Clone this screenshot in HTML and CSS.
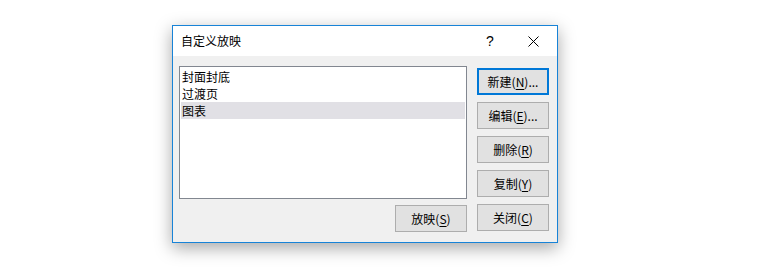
FILE: index.html
```html
<!DOCTYPE html>
<html>
<head>
  <title>自定义放映</title>
  <meta charset="utf-8">
  <link rel="stylesheet" href="styles.css">
</head>
<body>
  <div class="dialog">
    <div class="titlebar">
      <span class="title">自定义放映</span>
      <span class="help">?</span>
      <span class="close">
        <svg width="11" height="11" viewBox="0 0 11 11"><path d="M0.5 0.5 L10.5 10.5 M10.5 0.5 L0.5 10.5" stroke="#000" stroke-width="1" fill="none"/></svg>
      </span>
    </div>
    <div class="content">
      <div class="left">
        <ul class="list">
          <li>封面封底</li>
          <li>过渡页</li>
          <li class="selected">图表</li>
        </ul>
        <div class="bottom">
          <span class="btn">放映(<u>S</u>)</span>
        </div>
      </div>
      <div class="side">
        <span class="btn default">新建(<u>N</u>)...</span>
        <span class="btn">编辑(<u>E</u>)...</span>
        <span class="btn">删除(<u>R</u>)</span>
        <span class="btn">复制(<u>Y</u>)</span>
        <span class="btn">关闭(<u>C</u>)</span>
      </div>
    </div>
  </div>
</body>
</html>
```

FILE: styles.css
```css
html, body {
  height: 100%;
}
body {
  margin: 0;
  padding-top: 25px;
  box-sizing: border-box;
  background-color: #fff;
  font-family: "Noto Sans CJK SC", "Noto Sans", sans-serif;
  font-size: 12px;
  color: #000;
}
.dialog {
  width: 384px;
  margin-left: 172px;
  border: 1px solid #1883d7;
  background-color: #f0f0f0;
  box-shadow: 0 5px 16px rgba(0,0,0,.35);
}
.titlebar {
  height: 30px;
  background-color: #fff;
  display: flex;
  align-items: center;
  padding-left: 8px;
}
.title {
  flex: 1;
  line-height: 16px;
}
.help {
  font-family: "Liberation Sans", sans-serif;
  font-size: 14px;
  width: 20px;
  margin-right: 28px;
  text-align: center;
}
.close {
  display: flex;
  width: 11px;
  margin-right: 18px;
}
.content {
  display: flex;
  gap: 10px;
  padding: 10px 8px 10px 6px;
}
.left {
  display: flex;
  flex-direction: column;
  gap: 6px;
}
.list {
  width: 284px;
  height: 129px;
  margin: 0;
  padding: 1px;
  list-style: none;
  background-color: #fff;
  border: 1px solid #828790;
}
.list li {
  height: 17px;
  line-height: 17px;
  padding-left: 1px;
}
.list li.selected {
  background-color: #e1e0e5;
}
.bottom {
  display: flex;
  justify-content: flex-end;
}
.side {
  display: flex;
  flex-direction: column;
  gap: 7px;
  padding-top: 2px;
}
.btn {
  box-sizing: border-box;
  display: flex;
  align-items: center;
  justify-content: center;
  width: 72px;
  height: 27px;
  background-color: #e1e1e1;
  border: 1px solid #adadad;
}
.btn.default {
  border: 2px solid #0078d7;
}
.btn u {
  text-underline-offset: 2px;
}
```
